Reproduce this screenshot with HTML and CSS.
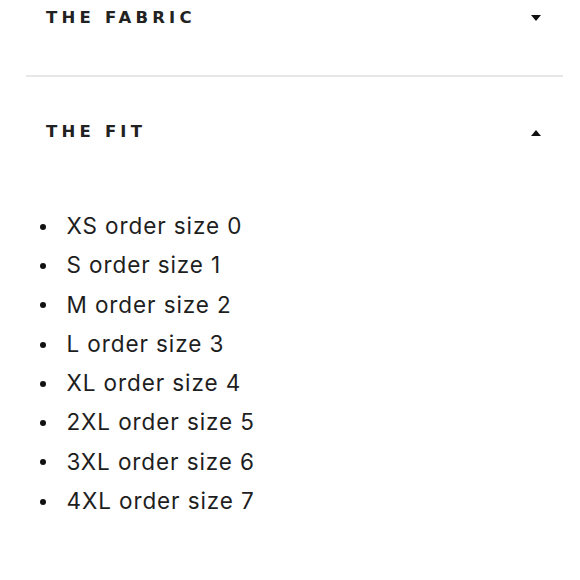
FILE: index.html
```html
<!DOCTYPE html>
<html>
<head>
<meta charset="utf-8">
<link rel="stylesheet" href="styles.css">
</head>
<body>
<div class="accordion">
  <section class="item">
    <div class="head">
      <h2 class="title">THE FABRIC</h2>
      <span class="caret caret-down"></span>
    </div>
  </section>
  <section class="item open">
    <div class="head">
      <h2 class="title">THE FIT</h2>
      <span class="caret caret-up"></span>
    </div>
    <ul class="sizes">
      <li>XS order size 0</li>
      <li>S order size 1</li>
      <li>M order size 2</li>
      <li>L order size 3</li>
      <li>XL order size 4</li>
      <li>2XL order size 5</li>
      <li>3XL order size 6</li>
      <li>4XL order size 7</li>
    </ul>
  </section>
</div>
</body>
</html>
```
FILE: styles.css
```css
html, body {
  margin: 0;
  padding: 0;
  background: #fff;
}
.accordion {
  padding: 0 17px 0 26px;
}
.item + .item {
  border-top: 2px solid #e8e6e6;
}
.head {
  display: flex;
  align-items: center;
  justify-content: space-between;
  height: 34px;
  padding: 0 22px 0 20px;
}
.item:first-child {
  padding-bottom: 41px;
}
.item.open {
  padding-top: 37px;
}
.title {
  margin: 0;
  font-family: "DejaVu Sans", Arial, sans-serif;
  font-weight: bold;
  font-size: 16.5px;
  letter-spacing: 4.2px;
  color: #222;
}
.caret {
  width: 0;
  height: 0;
  border-left: 5px solid transparent;
  border-right: 5px solid transparent;
}
.caret-down {
  border-top: 6px solid #111;
  margin-top: 2px;
}
.caret-up {
  border-bottom: 6px solid #111;
  margin-top: 4px;
}
.sizes {
  list-style: none;
  margin: 58px 0 0 0;
  padding: 0 0 0 13.5px;
  font-family: Inter, "Liberation Sans", sans-serif;
  font-size: 22.5px;
  letter-spacing: 0.9px;
  line-height: 39.3px;
  color: #1e1e1e;
}
.sizes li {
  display: flex;
  align-items: center;
}
.sizes li::before {
  content: "";
  flex: none;
  width: 6px;
  height: 6px;
  border-radius: 50%;
  background: #111;
  margin: 2px 21px 0 0;
}
```
